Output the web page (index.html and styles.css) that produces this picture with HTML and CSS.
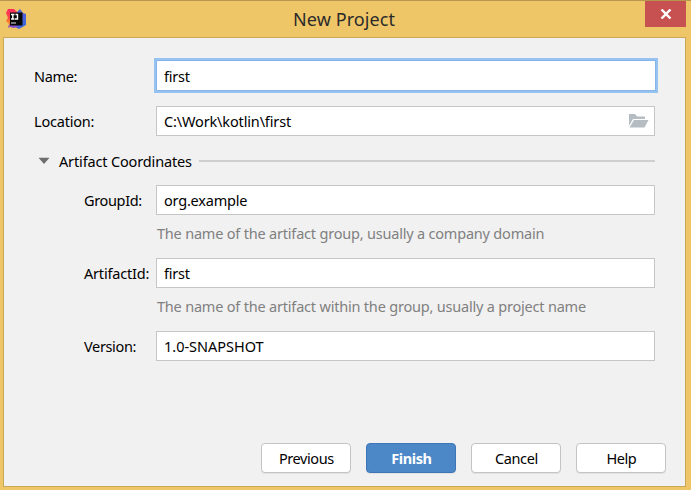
FILE: index.html
```html
<!DOCTYPE html>
<html lang="en">
<head>
<meta charset="utf-8">
<title>New Project</title>
<link rel="stylesheet" href="styles.css">
</head>
<body>
<div class="window">
  <header class="titlebar">
    <svg class="logo" width="20" height="20" viewBox="0 0 20 20">
      <defs>
        <linearGradient id="pink" x1="0" y1="0" x2="0" y2="1"><stop offset="0" stop-color="#ff2860"/><stop offset=".5" stop-color="#f94b45"/><stop offset=".7" stop-color="#ff8a20"/><stop offset="1" stop-color="#8848d0"/></linearGradient>
        <linearGradient id="blue" x1="0" y1="0" x2="1" y2="1"><stop offset="0" stop-color="#2873ee"/><stop offset=".45" stop-color="#5a5cd0"/><stop offset="1" stop-color="#2f6fe6"/></linearGradient>
      </defs>
      <path d="M2 0H8L11 3V17L4 18L2 19L3 15L0 12L2 9L0 4Z" fill="url(#pink)"/>
      <path d="M11 3L14 0L17 4L20 5V16L13 20L7 17L11 15Z" fill="url(#blue)"/>
      <path d="M2 17L8 15L12 18L7 19Z" fill="#8c52ce"/>
      <path d="M4 3.5H16.5V16.5H4Z" fill="#080808"/>
      <path d="M5 5.5H8.5M6.8 5.5V10M5 10H8.5M9.5 5.5H11.5V10H9" fill="none" stroke="#fff" stroke-width="1.4"/>
      <path d="M5 14H10" stroke="#aaa" stroke-width="1.4"/>
    </svg>
    <h1 class="title">New Project</h1>
    <button class="close" aria-label="Close"><svg width="12" height="10" viewBox="0 0 12 10"><path d="M1.5 .5L10.5 9.5M10.5 .5L1.5 9.5" stroke="#fff" stroke-width="2.4"/></svg></button>
  </header>
  <main class="client">
    <div class="row name"><span class="label tight">Name:</span><div class="field focused">first</div></div>
    <div class="row location"><span class="label">Location:</span><div class="field"><span class="path">C:\Work\kotlin\first</span>
      <svg class="folder" width="20" height="16" viewBox="0 0 20 16"><path d="M0 13V1H6L8 3.5H16V6H4Z" fill="#b5bdc2"/><path d="M5 7H19.5L15.5 14.5H.5Z" fill="#b5bdc2"/></svg></div></div>
    <div class="section"><svg width="12" height="8" viewBox="0 0 12 8"><path d="M.5 .7H11.5L6 7Z" fill="#6e6e6e"/></svg><span class="heading">Artifact Coordinates</span><i class="rule"></i></div>
    <div class="row group"><span class="label nested tight">GroupId:</span><div class="field">org.example</div></div>
    <p class="hint">The name of the artifact group, usually a company domain</p>
    <div class="row artifact"><span class="label nested">ArtifactId:</span><div class="field">first</div></div>
    <p class="hint">The name of the artifact within the group, usually a project name</p>
    <div class="row version"><span class="label nested tight">Version:</span><div class="field"><span class="snapshot">1.0-SNAPSHOT</span></div></div>
    <footer class="actions">
      <button class="btn">Previous</button>
      <button class="btn primary">Finish</button>
      <button class="btn">Cancel</button>
      <button class="btn">Help</button>
    </footer>
  </main>
</div>
</body>
</html>
```
FILE: styles.css
```css
* { box-sizing: border-box; }
body { margin: 0; font: 14.5px/20px "Noto Sans", "Open Sans", sans-serif; color: #000; letter-spacing: -.2px; white-space: nowrap; }
.window { width: 691px; height: 490px; padding: 0 5px 3px 3px; background: #efc667; border-top: 1px solid #b7964e; }
.titlebar { display: flex; height: 36px; align-items: flex-start; }
.logo { margin: 8px 0 0 3px; }
.title { margin: 5px 0 0; flex: 1; padding-left: 267px; font-size: 18px; line-height: 26px; font-weight: 400; color: #2b2b2b; letter-spacing: .1px; }
.close { width: 41px; height: 26px; padding: 0; border: 0; background: #c75050; display: flex; align-items: center; justify-content: center; }
.client { width: 683px; height: 450px; border: 1px solid #c9a757; background: #f1f1f1; padding: 24px 30px 0; display: flex; flex-direction: column; }
.row { display: flex; align-items: center; height: 30px; flex: none; }
.label { width: 122px; flex: none; }
.nested { padding-left: 50px; }
.tight { letter-spacing: -.35px; }
.field { width: 499px; height: 30px; flex: none; display: flex; align-items: center; justify-content: space-between; padding: 0 5px 0 7px; border: 1px solid #c6c6c6; background: #fff; }
.focused { width: 500px; border-color: #85b4e9; box-shadow: 0 0 0 2px #97c3f3; }
.path { letter-spacing: -.15px; }
.snapshot { letter-spacing: -.02px; }
.name { height: 31px; margin-top: -2px; }
.name .field { height: 31px; }
.location { margin-top: 15px; }
.section { display: flex; align-items: center; height: 20px; margin-top: 15px; padding-left: 4px; }
.heading { width: 149px; padding-left: 9px; letter-spacing: -.15px; }
.rule { width: 456px; height: 2px; background: #cfcfcf; }
.group { margin-top: 14px; }
.hint { margin: 8px 0 0 123px; height: 20px; color: #808080; }
.artifact, .version { margin-top: 15px; }
.actions { display: flex; gap: 15px; margin: auto 0 13px 227.4px; }
.btn { width: 90px; height: 30px; padding: 0; flex: none; border: 1px solid #c4c4c4; border-radius: 4px; background: #fff; color: #000; font: inherit; letter-spacing: -.4px; box-shadow: 0 1px 0 #e2e2e2; }
.primary { border-color: #3f76b7; background: #4c88c8; color: #fff; font-weight: 700; }
```
